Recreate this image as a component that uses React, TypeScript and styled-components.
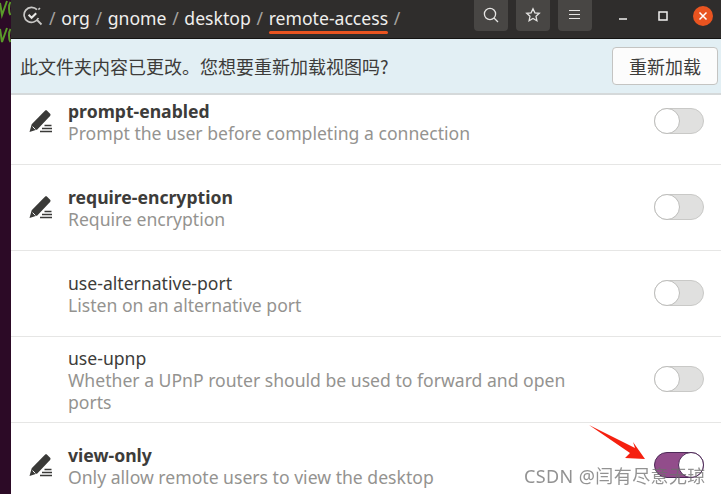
import React from "react";
import styled, { createGlobalStyle } from "styled-components";

const Global = createGlobalStyle`
  html, body { margin: 0; padding: 0; background: #fff; overflow: hidden; }
  body { font-family: "Noto Sans", "Noto Sans CJK SC", sans-serif; }
`;

const Page = styled.div`
  position: relative;
  width: 721px;
  height: 494px;
  display: flex;
  overflow: hidden;
`;

const Terminal = styled.div`
  width: 11px;
  flex: none;
  background: #2c0a26;
  overflow: hidden;
  display: flex;
  flex-direction: column;
`;

const Window = styled.div`
  flex: 1;
  min-width: 0;
  display: flex;
  flex-direction: column;
  background: #fff;
`;

const HeaderBar = styled.div`
  height: 39px;
  box-sizing: border-box;
  flex: none;
  background: #2f2d2c;
  border-bottom: 1px solid #141312;
  display: flex;
  align-items: center;
  color: #f0efed;
  padding-left: 12px;
`;

const LogoSlot = styled.div`
  display: flex;
  margin-top: -7px;
`;

const Crumbs = styled.div`
  display: flex;
  align-items: center;
  gap: 5.7px;
  font-size: 17.6px;
  margin-left: 6px;
  margin-top: -2px;
`;

const Sep = styled.span`
  color: #a5a3a0;
`;

const Active = styled.span`
  position: relative;
  &::after {
    content: "";
    position: absolute;
    left: 0;
    right: 0;
    bottom: -4px;
    height: 3px;
    border-radius: 2px;
    background: #e95420;
  }
`;

const Tools = styled.div`
  margin-left: auto;
  display: flex;
  align-items: center;
`;

const ToolButton = styled.div`
  width: 34px;
  height: 31px;
  margin: -8px 8px 0 0;
  border-radius: 0 0 4px 4px;
  background: #484644;
  display: flex;
  align-items: center;
  justify-content: center;
`;

const WinButton = styled.div<{ $w: number; $pl?: number }>`
  width: ${(p) => p.$w}px;
  box-sizing: border-box;
  padding-left: ${(p) => p.$pl ?? 0}px;
  margin-top: -7px;
  display: flex;
  align-items: center;
  justify-content: center;
`;

const Close = styled.div`
  width: 20px;
  height: 20px;
  border-radius: 50%;
  background: #e95420;
  display: flex;
  align-items: center;
  justify-content: center;
`;

const InfoBar = styled.div`
  height: 56px;
  flex: none;
  box-sizing: border-box;
  background: #e2eff4;
  border-bottom: 2px solid #d5d9da;
  display: flex;
  align-items: center;
  justify-content: space-between;
  padding: 0 3px 0 9px;
  color: #3d3c3a;
`;

const Message = styled.span`
  font-family: "Noto Sans CJK SC", sans-serif;
  font-size: 18px;
  margin-top: -1px;
`;

const ReloadButton = styled.div`
  width: 106px;
  height: 38px;
  box-sizing: border-box;
  border: 1px solid #c4c4c2;
  border-radius: 4px;
  background: #fcfcfc;
  display: flex;
  align-items: center;
  justify-content: center;
  font-family: "Noto Sans CJK SC", sans-serif;
  font-size: 18px;
  color: #3d3c3a;
`;

const List = styled.div`
  flex: 1;
  min-height: 0;
  overflow: hidden;
`;

const Row = styled.div<{ $h: number; $top: number }>`
  height: ${(p) => p.$h}px;
  box-sizing: border-box;
  padding: ${(p) => p.$top}px 17px 0 17px;
  border-bottom: 1px solid #e6e6e5;
  display: flex;
  align-items: flex-start;
  &:last-child { border-bottom: none; }
`;

const IconSlot = styled.div`
  width: 40px;
  flex: none;
  height: 42px;
  display: flex;
  align-items: center;
`;

const Texts = styled.div`
  width: 510px;
  flex: none;
`;

const Name = styled.div<{ $bold?: boolean }>`
  font-size: 17.6px;
  line-height: 22px;
  color: #3d3c3a;
  font-weight: ${(p) => (p.$bold ? 700 : 400)};
`;

const Desc = styled.div`
  font-size: 17.6px;
  line-height: 22px;
  color: #949390;
`;

const Switch = styled.div<{ $on?: boolean; $mt: number }>`
  margin-left: auto;
  margin-top: ${(p) => p.$mt}px;
  width: 50px;
  height: 26px;
  box-sizing: border-box;
  border-radius: 13px;
  border: 1px solid ${(p) => (p.$on ? "#4e2a58" : "#c9c9c7")};
  background: ${(p) => (p.$on ? "#924d8b" : "#e0e0df")};
  position: relative;
`;

const Knob = styled.div<{ $on?: boolean }>`
  position: absolute;
  top: -1px;
  ${(p) => (p.$on ? "right: -1px;" : "left: -1px;")}
  width: 26px;
  height: 26px;
  box-sizing: border-box;
  border-radius: 50%;
  background: #fff;
  border: 1px solid ${(p) => (p.$on ? "#4e2a58" : "#bdbdbb")};
`;

const Watermark = styled.div`
  position: absolute;
  left: 524px;
  top: 465px;
  font-size: 18px;
  line-height: 22px;
  letter-spacing: 0.4px;
  color: rgba(110, 110, 110, 0.75);
  filter: blur(0.4px);
  font-family: "Noto Sans", "Noto Sans CJK SC", sans-serif;
  white-space: nowrap;
`;

const ArrowLayer = styled.svg`
  position: absolute;
  left: 585px;
  top: 420px;
`;

const Pen = () => (
  <svg width="26" height="26" viewBox="0 0 26 26" fill="none">
    <path d="M1.5 24l2.2-7.8L15.2 4.6l1.8-1.8c.6-.6 1.5-.6 2.1 0l3 3c.6.6.6 1.5 0 2.1l-1.7 1.8L9.3 21.4z" fill="#3a3a38" />
    <path d="M4.6 18.6l2.8 2.9" stroke="#fff" strokeWidth="1" />
    <path d="M16.5 17.5h7M14 20.5h10M12 23.5h12" stroke="#3a3a38" strokeWidth="1.4" />
  </svg>
);

const LogoIcon = () => (
  <svg width="20" height="20" viewBox="0 0 20 20" fill="none" stroke="#c9c8c6">
    <path d="M14 3.6A7.5 7.5 0 1 0 15.4 12" strokeWidth="1.7" />
    <path d="M14 14l4.5 4.5" strokeWidth="1.8" />
    <path d="M5.6 8.8l3 3 4.6-4.6" stroke="#e8e7e5" strokeWidth="2" />
    <path d="M15.4 3.6l1.6-1.6" strokeWidth="1.5" />
  </svg>
);

const rows = [
  { name: "prompt-enabled", desc: ["Prompt the user before completing a connection"], bold: true, h: 70, top: 5, mt: 8 },
  { name: "require-encryption", desc: ["Require encryption"], bold: true, h: 86, top: 21, mt: 8 },
  { name: "use-alternative-port", desc: ["Listen on an alternative port"], bold: false, h: 86, top: 21, mt: 8 },
  { name: "use-upnp", desc: ["Whether a UPnP router should be used to forward and open", "ports"], bold: false, h: 86, top: 10, mt: 19 },
  { name: "view-only", desc: ["Only allow remote users to view the desktop"], bold: true, on: true, h: 71, top: 21, mt: 8 },
];

export default function App() {
  return (
    <Page>
      <Global />
      <Terminal>
        <svg width="11" height="60" viewBox="0 0 11 60" fill="none" stroke="#5a9a2a" strokeWidth="2">
          <path d="M0 3l2 12 5-14M10.5 2c-2 3-2 10 0 13" />
          <path d="M0 29l2 13 5-14M10.5 29c-2 3-2 10 0 13" />
        </svg>
      </Terminal>
      <Window>
        <HeaderBar>
          <LogoSlot><LogoIcon /></LogoSlot>
          <Crumbs>
            <Sep>/</Sep><span>org</span>
            <Sep>/</Sep><span>gnome</span>
            <Sep>/</Sep><span>desktop</span>
            <Sep>/</Sep><Active>remote-access</Active>
            <Sep>/</Sep>
          </Crumbs>
          <Tools>
            <ToolButton>
              <svg width="16" height="16" viewBox="0 0 16 16" fill="none" stroke="#e6e5e3" strokeWidth="1.3">
                <circle cx="7" cy="7" r="5.6" /><path d="M11 11l4 4" />
              </svg>
            </ToolButton>
            <ToolButton>
              <svg width="16" height="16" viewBox="0 0 16 16" fill="none" stroke="#e6e5e3" strokeWidth="1.3">
                <path d="M8 1.8l1.9 4 4.4.5-3.3 3 .9 4.4L8 11.5l-3.9 2.2.9-4.4-3.3-3 4.4-.5z" />
              </svg>
            </ToolButton>
            <ToolButton>
              <svg width="12" height="12" viewBox="0 0 12 12" stroke="#e6e5e3" strokeWidth="1">
                <path d="M0 1.5h11M0 5.5h11M0 9.5h11" />
              </svg>
            </ToolButton>
            <WinButton $w={46}>
              <svg width="10" height="10" viewBox="0 0 10 10" stroke="#f2f1ef" strokeWidth="1.5">
                <path d="M1 8h8" />
              </svg>
            </WinButton>
            <WinButton $w={34}>
              <svg width="10" height="10" viewBox="0 0 10 10" fill="none" stroke="#f2f1ef" strokeWidth="1.5">
                <rect x="1" y="1" width="8" height="8" />
              </svg>
            </WinButton>
            <WinButton $w={41} $pl={5}>
              <Close>
                <svg width="10" height="10" viewBox="0 0 10 10" stroke="#fff" strokeWidth="1.5">
                  <path d="M1.5 1.5l7 7M8.5 1.5l-7 7" />
                </svg>
              </Close>
            </WinButton>
          </Tools>
        </HeaderBar>
        <InfoBar>
          <Message>此文件夹内容已更改。您想要重新加载视图吗?</Message>
          <ReloadButton>重新加载</ReloadButton>
        </InfoBar>
        <List>
          {rows.map((r) => (
            <Row key={r.name} $h={r.h} $top={r.top}>
              <IconSlot>{r.bold && <Pen />}</IconSlot>
              <Texts>
                <Name $bold={r.bold}>{r.name}</Name>
                {r.desc.map((d) => <Desc key={d}>{d}</Desc>)}
              </Texts>
              <Switch $on={r.on} $mt={r.mt}>
                <Knob $on={r.on} />
              </Switch>
            </Row>
          ))}
        </List>
      </Window>
      <ArrowLayer width="70" height="60" viewBox="0 0 70 60">
        <path d="M4 5L50 28 48 22 60 39 40 38 45 33z" fill="#f5200f" />
      </ArrowLayer>
      <Watermark>CSDN @闫有尽意无琼</Watermark>
    </Page>
  );
}
